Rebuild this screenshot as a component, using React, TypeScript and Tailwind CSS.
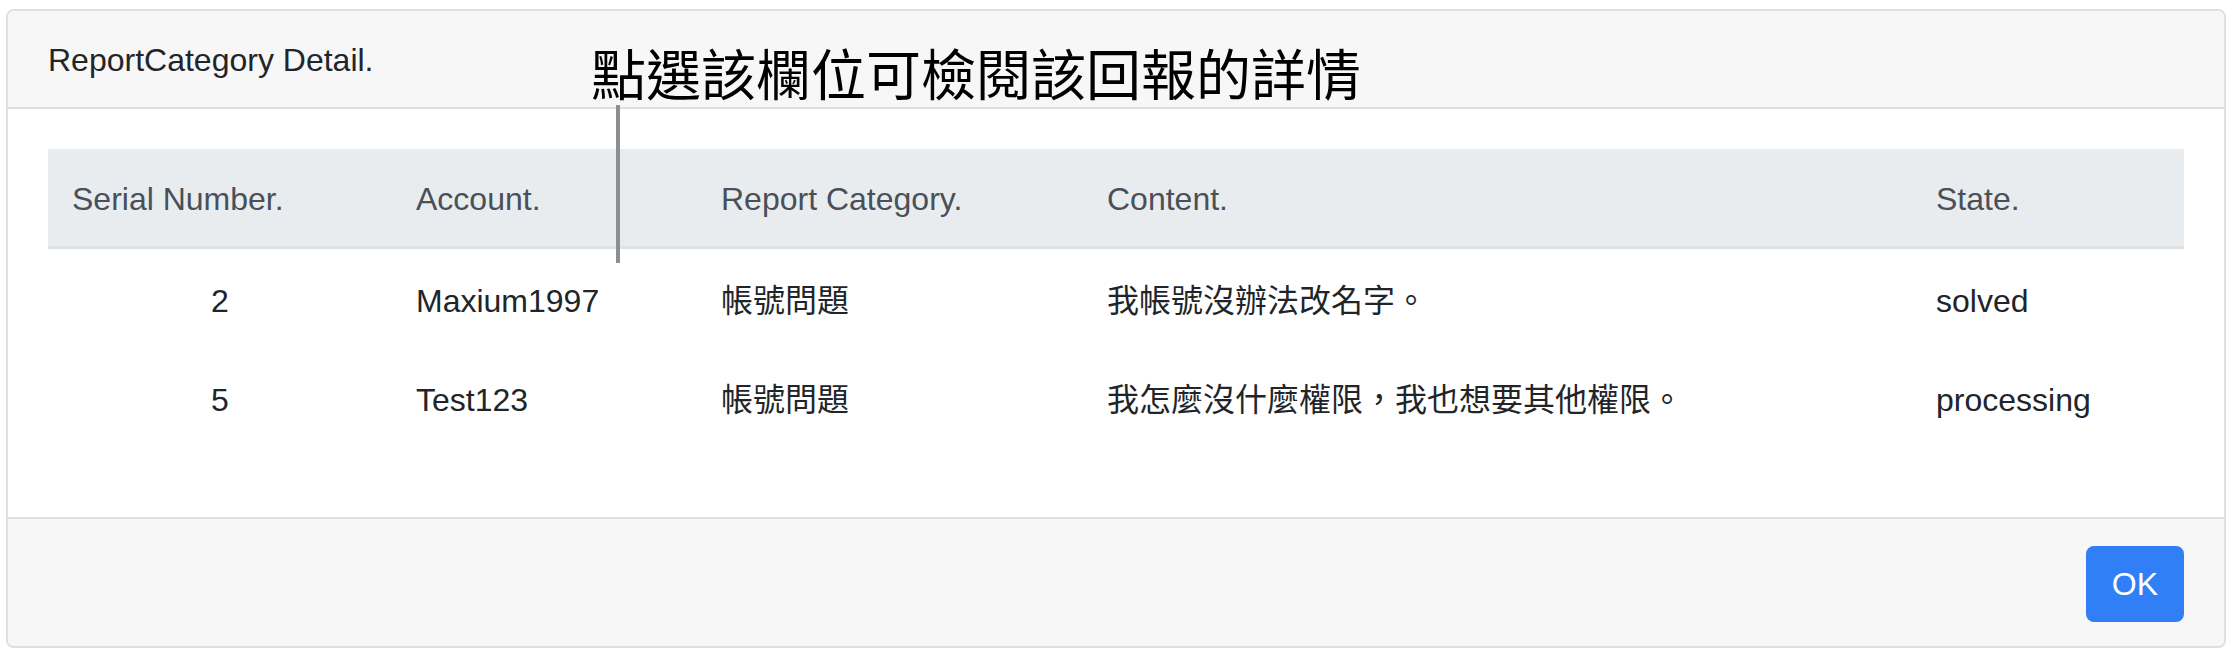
import React from "react";

const rows = [
  { id: "2", account: "Maxium1997", category: "帳號問題", content: "我帳號沒辦法改名字。", state: "solved" },
  { id: "5", account: "Test123", category: "帳號問題", content: "我怎麼沒什麼權限，我也想要其他權限。", state: "processing" },
];

export default function App() {
  return (
    <div
      className="relative w-[2234px] h-[657px] bg-white pt-[9px] pl-[6px] pr-[8px]"
      style={{ fontFamily: '"Liberation Sans", "Noto Sans CJK TC", sans-serif' }}
    >
      <div className="border-2 border-[#dfdfdf] rounded-[8px] overflow-hidden flex flex-col">
        <div className="bg-[#f7f7f7] px-[40px] pt-[25px] pb-[23px] border-b-2 border-[#dfdfdf] text-[32px] leading-[48px] text-[#212529]">
          ReportCategory Detail.
        </div>
        <div className="bg-white p-[40px]">
          <table className="w-full table-fixed border-collapse mb-[30px] text-[32px] leading-[48px]">
            <colgroup>
              <col className="w-[344px]" />
              <col className="w-[305px]" />
              <col className="w-[386px]" />
              <col className="w-[829px]" />
              <col className="w-[272px]" />
            </colgroup>
            <thead>
              <tr className="bg-[#e9ecef] text-[#495057]">
                {["Serial Number.", "Account.", "Report Category.", "Content.", "State."].map((h) => (
                  <th
                    key={h}
                    className="text-left font-normal px-[24px] pt-[26px] pb-[23px] border-b-[3px] border-[#dee2e6] whitespace-nowrap"
                  >
                    {h}
                  </th>
                ))}
              </tr>
            </thead>
            <tbody className="text-[#212529]">
              {rows.map((r) => (
                <tr key={r.id}>
                  <td className="text-center px-[24px] pt-[28px] pb-[23px]">{r.id}</td>
                  <td className="px-[24px] pt-[28px] pb-[23px]">{r.account}</td>
                  <td className="px-[24px] pt-[28px] pb-[23px]">{r.category}</td>
                  <td className="px-[24px] pt-[28px] pb-[23px] whitespace-nowrap">{r.content}</td>
                  <td className="px-[24px] pt-[28px] pb-[23px]">{r.state}</td>
                </tr>
              ))}
            </tbody>
          </table>
        </div>
        <div className="bg-[#f7f7f7] border-t-2 border-[#dfdfdf] px-[40px] pt-[27px] pb-[24px] flex justify-end">
          <button className="bg-[#307ff6] border-2 border-[#307ff6] text-white text-[32px] leading-[48px] px-[24px] py-[12px] rounded-[8px]">
            OK
          </button>
        </div>
      </div>

      <div
        className="absolute left-[591px] top-[44px] text-[55px] leading-none text-black whitespace-nowrap"
        style={{ fontFamily: '"Noto Sans CJK TC", sans-serif' }}
      >
        點選該欄位可檢閱該回報的詳情
      </div>
      <div className="absolute left-[616px] top-[105px] w-[4px] h-[158px] bg-[#8e8e8e]" />
    </div>
  );
}
